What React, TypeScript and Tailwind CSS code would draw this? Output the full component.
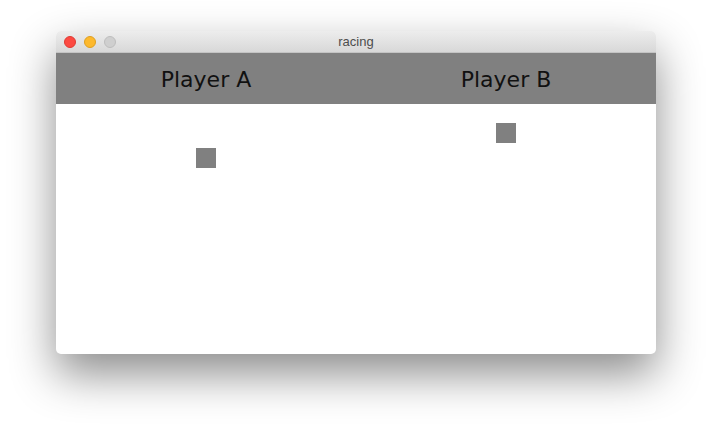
export default function App() {
  const players = [
    { name: "Player A", top: "mt-[44px]" },
    { name: "Player B", top: "mt-[19px]" },
  ];

  return (
    <div className="w-[712px] h-[434px] bg-white pt-[31px] overflow-hidden">
      {/* window */}
      <div className="mx-auto w-[600px] rounded-[5px] bg-white shadow-[0_20px_45px_rgba(0,0,0,0.45)] overflow-hidden">
        {/* title bar */}
        <div className="relative h-[22px] flex items-center justify-center bg-gradient-to-b from-[#ededed] to-[#d8d8d8] border-b border-[#c4c4c4]">
          <div className="absolute left-[8px] top-[5px] flex gap-[8px]">
            <span className="w-[12px] h-[12px] rounded-full bg-[#fc4a42] border border-[#de3b33]" />
            <span className="w-[12px] h-[12px] rounded-full bg-[#fdb92d] border border-[#de9f20]" />
            <span className="w-[12px] h-[12px] rounded-full bg-[#cfcfcf] border border-[#bdbdbd]" />
          </div>
          <span className="text-[13px] text-[#4d4d4d] font-['Liberation_Sans',sans-serif] leading-none">racing</span>
        </div>

        {/* game */}
        <div className="grid grid-cols-2 h-[301px]">
          {players.map((p) => (
            <div key={p.name} className="flex flex-col">
              <div className="h-[51px] bg-[#808080] flex items-center justify-center pt-[3px]">
                <span className="text-[22px] text-[#111] font-['DejaVu_Sans',sans-serif] leading-none">{p.name}</span>
              </div>
              <div className={`w-[20px] h-[20px] bg-[#808080] mx-auto ${p.top}`} />
            </div>
          ))}
        </div>
      </div>
    </div>
  );
}
